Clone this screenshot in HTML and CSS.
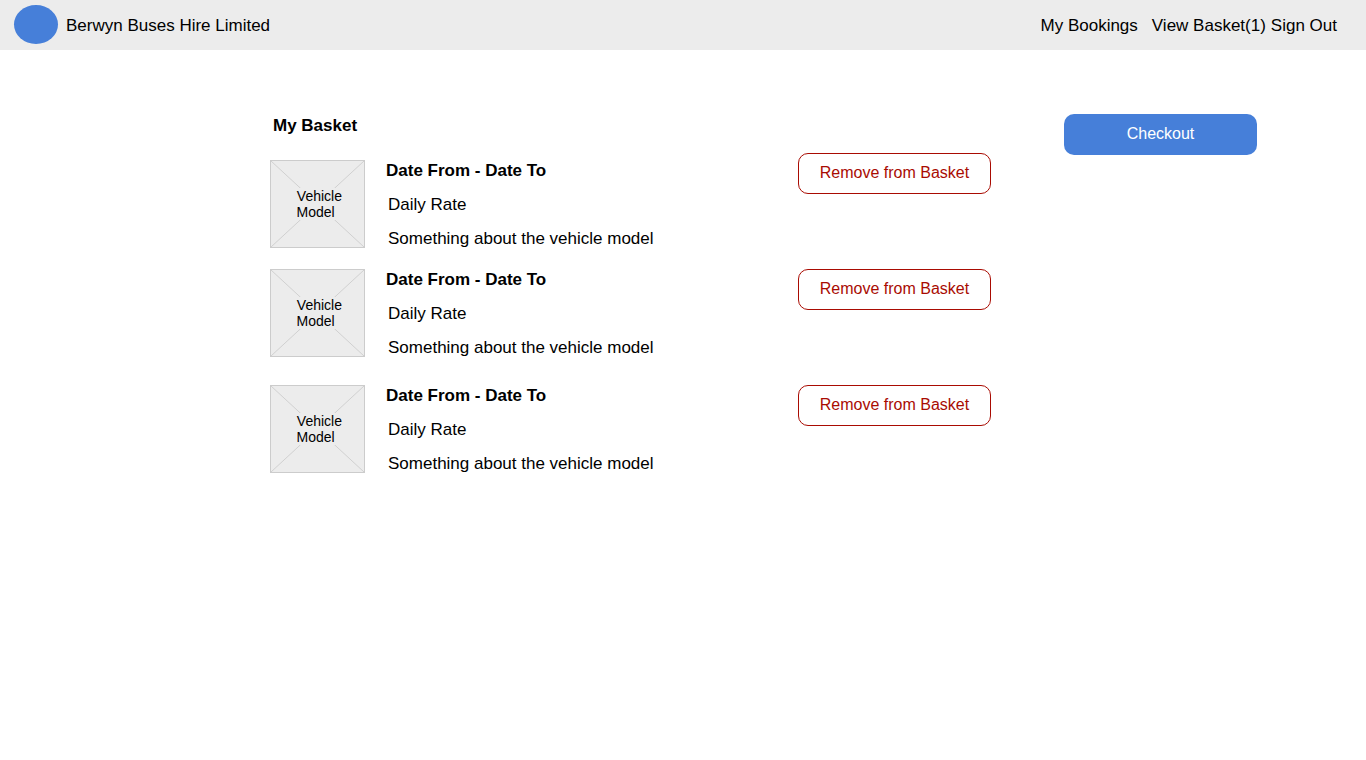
FILE: index.html
```html
<!DOCTYPE html>
<html lang="en">
<head>
<meta charset="utf-8">
<meta name="viewport" content="width=device-width, initial-scale=1">
<title>My Basket - Berwyn Buses Hire Limited</title>
<link rel="stylesheet" href="styles.css">
</head>
<body>
<header class="topbar">
  <a class="brand" href="#"><span class="logo"></span><span class="brand-name">Berwyn Buses Hire Limited</span></a>
  <nav class="nav">
    <a class="nav-bookings" href="#">My Bookings</a>
    <a href="#">View Basket(1)</a>
    <a href="#">Sign Out</a>
  </nav>
</header>
<main class="page">
  <section class="basket">
    <h1 class="title">My Basket</h1>
    <ul class="items">
      <li class="item">
        <div class="thumb">
          <svg class="cross" viewBox="0 0 93 86" preserveAspectRatio="none" aria-hidden="true"><path d="M0 0L93 86M93 0L0 86"/></svg>
          <span class="label">&nbsp;Vehicle<br>Model&nbsp;</span>
        </div>
        <div class="details">
          <h2 class="dates">Date From - Date To</h2>
          <p class="line">Daily Rate</p>
          <p class="line">Something about the vehicle model</p>
        </div>
        <button class="button remove" type="button">Remove from Basket</button>
      </li>
      <li class="item">
        <div class="thumb">
          <svg class="cross" viewBox="0 0 93 86" preserveAspectRatio="none" aria-hidden="true"><path d="M0 0L93 86M93 0L0 86"/></svg>
          <span class="label">&nbsp;Vehicle<br>Model&nbsp;</span>
        </div>
        <div class="details">
          <h2 class="dates">Date From - Date To</h2>
          <p class="line">Daily Rate</p>
          <p class="line">Something about the vehicle model</p>
        </div>
        <button class="button remove" type="button">Remove from Basket</button>
      </li>
      <li class="item">
        <div class="thumb">
          <svg class="cross" viewBox="0 0 93 86" preserveAspectRatio="none" aria-hidden="true"><path d="M0 0L93 86M93 0L0 86"/></svg>
          <span class="label">&nbsp;Vehicle<br>Model&nbsp;</span>
        </div>
        <div class="details">
          <h2 class="dates">Date From - Date To</h2>
          <p class="line">Daily Rate</p>
          <p class="line">Something about the vehicle model</p>
        </div>
        <button class="button remove" type="button">Remove from Basket</button>
      </li>
    </ul>
  </section>
  <button class="button checkout" type="button">Checkout</button>
</main>
</body>
</html>
```
FILE: styles.css
```css
* {
  box-sizing: border-box;
}

body {
  margin: 0;
  background: #fff;
  color: #000;
  font: 17px/20px "Liberation Sans", Arial, sans-serif;
}

a {
  color: inherit;
  text-decoration: none;
}

.topbar {
  display: flex;
  align-items: center;
  justify-content: space-between;
  min-height: 50px;
  padding: 5px 29px 6px 14px;
  background: #ececec;
}

.brand {
  display: flex;
  align-items: center;
  gap: 8px;
}

.brand-name,
.nav {
  padding-top: 2px;
}

.logo {
  width: 44px;
  height: 39px;
  border-radius: 50%;
  background: #467fd9;
}

.nav {
  display: flex;
  gap: 5px;
}

.nav-bookings {
  margin-right: 9px;
}

.page {
  display: flex;
  align-items: flex-start;
  gap: 73px;
  padding: 64px 109px 24px 270px;
}

.basket {
  flex: 1;
}

.title {
  margin: 0 0 17px;
  padding: 2px 0 0 3px;
  font-size: 17px;
}

.items {
  display: grid;
  grid-auto-rows: minmax(116px, auto);
  margin: 0;
  padding: 0;
  list-style: none;
}

.item {
  display: flex;
  align-items: flex-start;
}

.item:first-child .thumb,
.item:first-child .details {
  margin-top: 7px;
}

.thumb {
  display: grid;
  place-items: center;
  width: 95px;
  height: 88px;
  border: 1px solid #ccc;
  background: #ececec;
}

.cross,
.label {
  grid-area: 1 / 1;
}

.cross {
  width: 93px;
  height: 86px;
  fill: none;
  stroke: #d0d0d0;
}

.label {
  z-index: 1;
  background: #ececec;
  font-size: 14px;
  line-height: 16px;
  text-align: center;
}

.details {
  flex: 1;
  display: grid;
  gap: 14px;
  padding: 1px 0 0 21px;
}

.dates {
  margin: 0;
  font-size: 17px;
}

.line {
  margin: 0;
  padding-left: 2px;
}

.button {
  width: 193px;
  height: 41px;
  padding: 0 0 2px;
  border-radius: 10px;
  font: 16px/20px "Liberation Sans", Arial, sans-serif;
}

.remove {
  border: 1px solid #a90b02;
  background: #fff;
  color: #a90b02;
}

.checkout {
  border: 0;
  background: #467fd9;
  color: #fff;
}
```
